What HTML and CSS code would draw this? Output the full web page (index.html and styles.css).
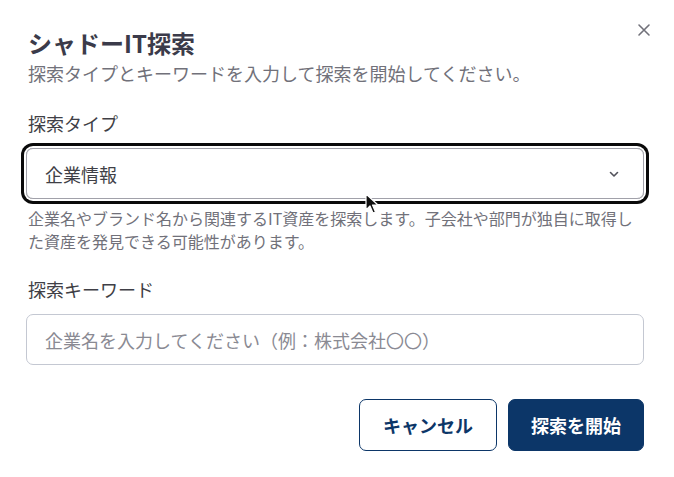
FILE: index.html
```html
<!DOCTYPE html>
<html lang="ja">
<head>
<meta charset="utf-8">
<link rel="stylesheet" href="styles.css">
</head>
<body>
<div class="dialog">
  <button class="close" aria-label="閉じる">
    <svg width="14" height="14" viewBox="0 0 14 14"><path d="M2 2L12 12M12 2L2 12" stroke="#71717a" stroke-width="1.6" stroke-linecap="round"/></svg>
  </button>
  <h1 class="title">シャドーIT探索</h1>
  <p class="subtitle">探索タイプとキーワードを入力して探索を開始してください。</p>

  <div class="field">
    <div class="label">探索タイプ</div>
    <div class="select">
      <span>企業情報</span>
      <svg width="14" height="14" viewBox="0 0 14 14"><path d="M3.5 5.5L7 9L10.5 5.5" fill="none" stroke="#52525b" stroke-width="1.6" stroke-linecap="round" stroke-linejoin="round"/></svg>
    </div>
    <p class="help">企業名やブランド名から関連するIT資産を探索します。子会社や部門が独自に取得した資産を発見できる可能性があります。</p>
  </div>

  <div class="field field2">
    <div class="label">探索キーワード</div>
    <div class="input">企業名を入力してください（例：株式会社〇〇）</div>
  </div>

  <div class="actions">
    <button class="btn btn-outline">キャンセル</button>
    <button class="btn btn-primary">探索を開始</button>
  </div>

  <svg class="cursor" width="14" height="22" viewBox="0 0 14 22"><path d="M1 1L1 17L5 13L8 20L10.5 19L7.5 12L13 12Z" fill="#111" stroke="#fff" stroke-width="1.2" stroke-linejoin="round"/></svg>
</div>
</body>
</html>
```
FILE: styles.css
```css
* { box-sizing: border-box; }
html, body { margin: 0; padding: 0; background: #fff; }
body {
  font-family: "Noto Sans CJK JP", "Noto Sans", sans-serif;
  color: #3f3f46;
}
.dialog {
  position: relative;
  width: 674px;
  height: 477px;
  padding: 27px 30px 0 26px;
}
.close {
  position: absolute;
  top: 23px;
  right: 23px;
  border: 0;
  background: none;
  padding: 0;
  width: 14px;
  height: 14px;
  display: flex;
}
.title {
  margin: 0;
  font-size: 24px;
  line-height: 32px;
  font-weight: 700;
  color: #3b3b4a;
  padding-left: 2px;
}
.subtitle {
  margin: 1px 0 0;
  font-size: 18px;
  line-height: 26px;
  color: #71717a;
  padding-left: 2px;
}
.field { margin-top: 24px; }
.field2 { margin-top: 23px; }
.label {
  font-size: 18px;
  line-height: 26px;
  color: #3f3f46;
  padding-left: 2px;
}
.select {
  margin-top: 12px;
  height: 51px;
  border: 1px solid #a1a1aa;
  border-radius: 7px;
  box-shadow: 0 0 0 2px #fff, 0 0 0 5px #0a0a0a;
  display: flex;
  align-items: center;
  justify-content: space-between;
  padding: 0 22px 0 18px;
  font-size: 18px;
  color: #3f3f46;
}
.help {
  margin: 8px 0 0;
  font-size: 16px;
  line-height: 23px;
  color: #71717a;
  padding-left: 2px;
}
.input {
  margin-top: 12px;
  height: 51px;
  border: 1px solid #c4c8d2;
  border-radius: 7px;
  display: flex;
  align-items: center;
  padding: 0 18px;
  font-size: 18px;
  color: #8a8a93;
}
.actions {
  margin-top: 34px;
  display: flex;
  justify-content: flex-end;
  gap: 11px;
}
.btn {
  height: 52px;
  border-radius: 7px;
  font-family: "Noto Sans CJK JP", "Noto Sans", sans-serif;
  font-size: 18px;
  font-weight: 700;
  cursor: pointer;
  padding: 0;
}
.btn-outline {
  width: 138px;
  background: #fff;
  color: #0c3668;
  border: 1.5px solid #0c3668;
}
.btn-primary {
  width: 136px;
  background: #0c3668;
  color: #fff;
  border: 1px solid #0c3668;
}
.cursor {
  position: absolute;
  left: 365px;
  top: 193px;
}
```
